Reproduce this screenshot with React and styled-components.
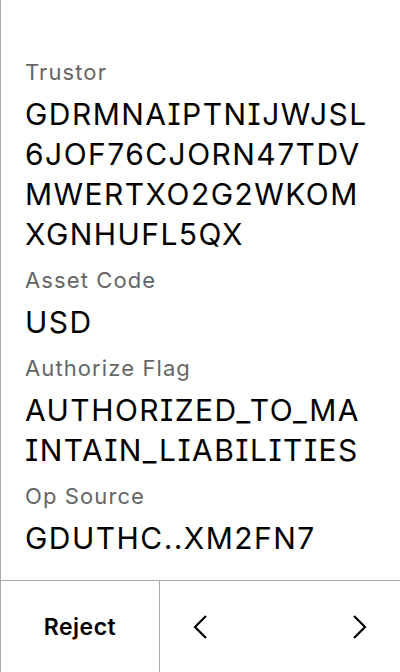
import React from "react";
import styled, { createGlobalStyle } from "styled-components";

const Global = createGlobalStyle`
  html, body { margin: 0; padding: 0; background: #fff; }
  body { font-family: Inter, "Noto Sans", sans-serif; -webkit-font-smoothing: antialiased; }
  #root { width: 400px; height: 672px; }
`;

const Screen = styled.div`
  width: 400px;
  height: 672px;
  box-sizing: border-box;
  border-left: 1px solid #a8a8a8;
  display: flex;
  flex-direction: column;
  overflow: hidden;
`;

const Details = styled.div`
  flex: 1;
  padding: 58px 24px 0 24px;
  display: flex;
  flex-direction: column;
`;

const Label = styled.div`
  font-size: 22px;
  line-height: 28px;
  letter-spacing: 1.1px;
  color: #666;
  margin-top: ${(p) => (p.$first ? 0 : 12)}px;
  margin-bottom: 8px;
`;

const Value = styled.div`
  font-size: 30px;
  line-height: 40px;
  letter-spacing: 1.45px;
  font-feature-settings: "cv08" 1;
  color: #000;
  display: flex;
  flex-direction: column;
`;

const ValueLine = styled.span`
  white-space: nowrap;
`;

const Footer = styled.div`
  height: 92px;
  border-top: 1px solid #a8a8a8;
  display: flex;
  box-sizing: border-box;
`;

const RejectButton = styled.button`
  width: 159px;
  border: none;
  border-right: 1px solid #a8a8a8;
  background: transparent;
  font-family: Inter, "Noto Sans", sans-serif;
  font-weight: 600;
  font-size: 23px;
  letter-spacing: 0.5px;
  color: #000;
  padding: 0;
`;

const Nav = styled.div`
  flex: 1;
  display: flex;
  align-items: center;
  justify-content: space-between;
  padding: 0 28px 0 28px;
`;

const NavButton = styled.button`
  width: 24px;
  height: 32px;
  border: none;
  background: transparent;
  padding: 0;
  display: flex;
  align-items: center;
  justify-content: center;
`;

const Chevron = ({ dir }) => (
  <svg width="16" height="26" viewBox="0 0 16 26" fill="none">
    <path
      d={dir === "left" ? "M14 2 L3 13 L14 24" : "M2 2 L13 13 L2 24"}
      stroke="#000"
      strokeWidth="2.2"
      strokeLinecap="butt"
      strokeLinejoin="miter"
    />
  </svg>
);

const fields = [
  { label: "Trustor", lines: ["GDRMNAIPTNIJWJSL", "6JOF76CJORN47TDV", "MWERTXO2G2WKOM", "XGNHUFL5QX"] },
  { label: "Asset Code", lines: ["USD"] },
  { label: "Authorize Flag", lines: ["AUTHORIZED_TO_MA", "INTAIN_LIABILITIES"] },
  { label: "Op Source", lines: ["GDUTHC..XM2FN7"] },
];

export default function App() {
  return (
    <>
      <Global />
      <Screen>
        <Details>
          {fields.map((f, i) => (
            <React.Fragment key={f.label}>
              <Label $first={i === 0}>{f.label}</Label>
              <Value>
                {f.lines.map((l) => (
                  <ValueLine key={l}>{l}</ValueLine>
                ))}
              </Value>
            </React.Fragment>
          ))}
        </Details>
        <Footer>
          <RejectButton>Reject</RejectButton>
          <Nav>
            <NavButton aria-label="Previous"><Chevron dir="left" /></NavButton>
            <NavButton aria-label="Next"><Chevron dir="right" /></NavButton>
          </Nav>
        </Footer>
      </Screen>
    </>
  );
}
